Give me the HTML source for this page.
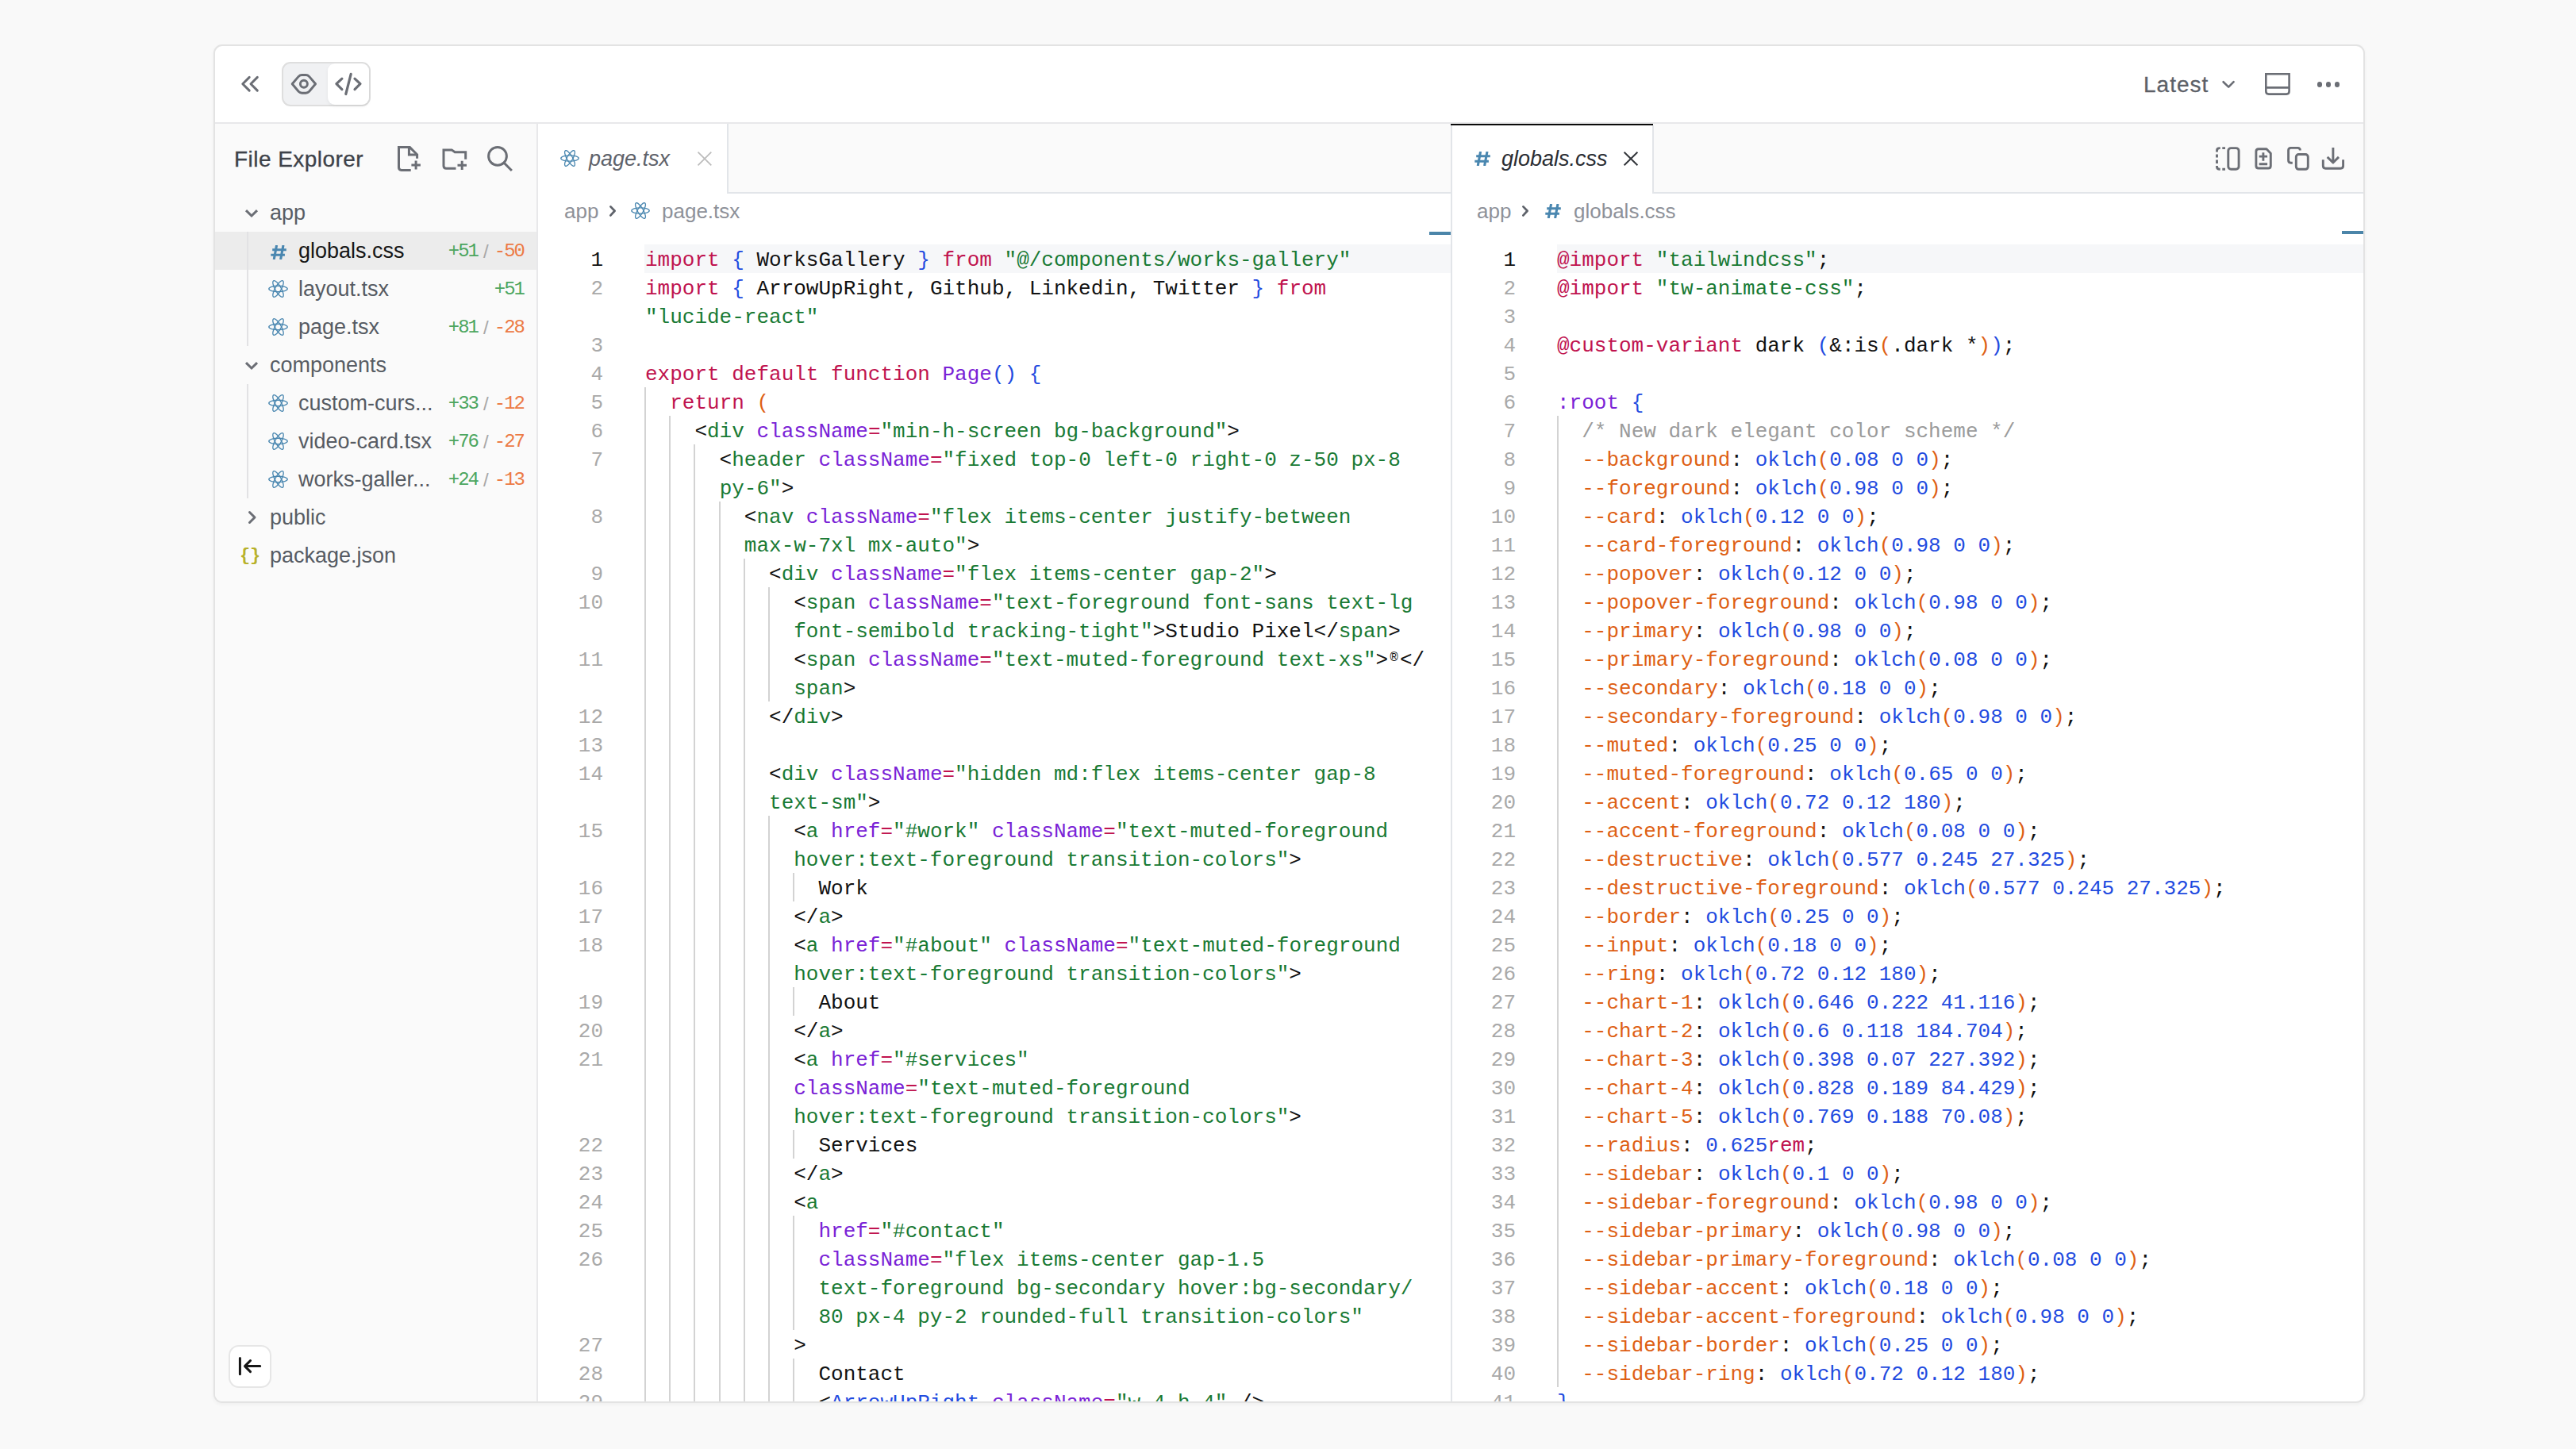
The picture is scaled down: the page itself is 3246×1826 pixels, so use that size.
<!DOCTYPE html>
<html><head><meta charset="utf-8"><title>Editor</title>
<style>
*{margin:0;padding:0;box-sizing:border-box}
html,body{width:3246px;height:1826px;overflow:hidden;background:#f9f9f9;font-family:"Liberation Sans",sans-serif}
.a{position:absolute}
#card{position:absolute;left:269px;top:56px;width:2711px;height:1712px;border:2px solid #e3e3e3;border-radius:11px;background:#fff;overflow:hidden;box-shadow:0 2px 5px rgba(0,0,0,0.045)}
.hl{position:absolute;background:#e4e4e7}
.sans{font-family:"Liberation Sans",sans-serif;white-space:pre;line-height:1}
.mono{font-family:"Liberation Mono",monospace;white-space:pre}
.code{position:absolute;font-family:"Liberation Mono",monospace;font-size:26px;line-height:36px;white-space:pre;color:#111}
.ln{position:absolute;font-family:"Liberation Mono",monospace;font-size:26px;line-height:36px;white-space:pre;color:#a9a9a9;text-align:right;width:80px}
.k{color:#c0134f}.b{color:#1f4be0}.o{color:#de5f14}.t{color:#111}.s{color:#197a34}.p{color:#7a22d6}.c{color:#9b9b9b}
.g{position:absolute;width:2px;background:#d3d3d3}
.row{position:absolute;left:271px;width:405px;height:48px}
.fname{position:absolute;font-size:27px;line-height:1;color:#565b63;white-space:pre}
.diff{position:absolute;font-family:"Liberation Mono",monospace;font-size:24px;line-height:1;white-space:pre;text-align:right;letter-spacing:-2px}
.add{color:#4ca65f}.del{color:#ec7a45}.sl{color:#a8a8a8;font-family:"Liberation Sans",sans-serif}
</style></head>
<body>
<div id="card"><div class="a" style="left:-271px;top:-58px;width:3246px;height:1826px">
<div class="hl" style="left:271px;top:154px;width:2707px;height:2px;background:#e8e8ea"></div>
<svg class="a" style="left:0;top:0" width="3246" height="160" viewBox="0 0 3246 160" fill="none" stroke="#6b6e75" stroke-width="3" stroke-linecap="round" stroke-linejoin="round">
<path d="M314.2 97.4 L305.8 105.7 L314.2 114.1 M324.3 97.4 L316 105.7 L324.3 114.1"/>
</svg>
<div class="a" style="left:355px;top:78px;width:112px;height:56px;border:2px solid #dedede;border-radius:11px;background:#f0f1f3"></div>
<div class="a" style="left:413px;top:80px;width:52px;height:52px;border-radius:9px;background:#fff;box-shadow:0 2px 4px rgba(0,0,0,0.06)"></div>
<svg class="a" style="left:0;top:0" width="3246" height="160" viewBox="0 0 3246 160" fill="none" stroke="#6b6e75" stroke-width="3.2" stroke-linecap="round" stroke-linejoin="round">
<path d="M368.2 105.8 L376.2 96.4 Q378 94.5 380.5 94.5 H385.3 Q387.8 94.5 389.6 96.4 L397.6 105.8 L389.6 115.3 Q387.8 117.2 385.3 117.2 H380.5 Q378 117.2 376.2 115.3 Z" stroke-width="2.9"/>
<circle cx="382.9" cy="105.8" r="4.5" stroke-width="2.9"/>
<path d="M430.9 99.1 L423.9 105.7 L430.9 112.6 M447 99.1 L454 105.7 L447 112.6 M442.2 93.4 L435.8 118.5"/>
</svg>
<div class="a sans" style="left:2701px;top:92.5px;font-size:28px;color:#5c6067;letter-spacing:1px;-webkit-text-stroke:0.3px #5c6067">Latest</div>
<svg class="a" style="left:0;top:0" width="3246" height="160" viewBox="0 0 3246 160" fill="none" stroke="#6b6e75" stroke-width="2.6" stroke-linecap="round" stroke-linejoin="round">
<path d="M2801.6 103.2 L2808.2 109.6 L2814.6 103.2"/>
<path d="M2855.3 93.3 H2884.6 V115 Q2884.6 118.6 2881 118.6 H2858.9 Q2855.3 118.6 2855.3 115 Z M2855.3 110.4 H2884.6" stroke-linecap="butt" stroke-linejoin="miter"/>
</svg>
<div class="a" style="left:2919.5px;top:102.8px;width:6.8px;height:6.8px;border-radius:50%;background:#6b6e75"></div>
<div class="a" style="left:2930.6px;top:102.8px;width:6.8px;height:6.8px;border-radius:50%;background:#6b6e75"></div>
<div class="a" style="left:2941.5px;top:102.8px;width:6.8px;height:6.8px;border-radius:50%;background:#6b6e75"></div>
<div class="a" style="left:271px;top:156px;width:405px;height:1610px;background:#fafafa"></div>
<div class="a" style="left:676px;top:156px;width:2px;height:1610px;background:#e8e8ea"></div>
<div class="a sans" style="left:295px;top:187px;font-size:28px;color:#3e4249;letter-spacing:0.45px;-webkit-text-stroke:0.3px #3e4249">File Explorer</div>
<svg class="a" style="left:490px;top:175px" width="170" height="50" viewBox="0 0 170 50" fill="none" stroke="#6b6e75" stroke-width="3" stroke-linecap="butt" stroke-linejoin="miter">
<path d="M27.7 39.4 H15.8 Q12.5 39.4 12.5 36.1 V10.6 H26.4 L35.6 19.8 V24.8"/>
<path d="M25.4 10.6 V20.1 H35.6"/>
<path d="M28.4 33 H39.9 M34.1 27.4 V38.6"/>
<path d="M84.5 37.3 H72.3 Q69 37.3 69 34 V13.9 H79.2 L83.2 16.8 H96.7 V25.7"/>
<path d="M86.5 33.3 H98 M92.2 27.7 V38.9"/>
<circle cx="137" cy="21.8" r="11.4"/>
<path d="M145.2 30.3 L153.8 38.9" stroke-linecap="square"/>
</svg>
<div class="a" style="left:271px;top:292px;width:405px;height:48px;background:#ececec"></div>
<div class="a" style="left:311px;top:292px;width:2px;height:144px;background:#e2e2e4"></div>
<div class="a" style="left:311px;top:484px;width:2px;height:144px;background:#e2e2e4"></div>
<svg class="a" style="left:305px;top:261.5px" width="24" height="16" viewBox="0 0 24 16" fill="none" stroke="#6b6e75" stroke-width="3" stroke-linecap="butt" stroke-linejoin="miter"><path d="M5 3.2 L12 10 L19 3.2"/></svg>
<div class="fname" style="left:340px;top:255px;color:#585d64">app</div>
<svg class="a" style="left:341px;top:309px" width="20" height="18" viewBox="0 0 20 18" fill="none" stroke="#4a87b0" stroke-width="3.1" stroke-linecap="butt"><path d="M7.6 0 L4.2 18 M16 0 L12.6 18 M2.2 5.8 H19.8 M0.3 12.2 H17.9"/></svg>
<div class="fname" style="left:376px;top:303px;color:#161616">globals.css</div>
<div class="diff add" style="right:2644px;top:305px">+51</div>
<div class="a sans" style="left:609px;top:305px;font-size:24px;color:#a8a8a8">/</div>
<div class="diff del" style="right:2586px;top:305px">-50</div>
<svg class="a" style="left:338px;top:353px" width="25" height="22" viewBox="0 0 25 22" fill="none" stroke="#4a87b0" stroke-width="1.35"><ellipse cx="12.5" cy="11.0" rx="11.7" ry="3.74" transform="rotate(0 12.5 11.0)"/><ellipse cx="12.5" cy="11.0" rx="11.7" ry="3.74" transform="rotate(60 12.5 11.0)"/><ellipse cx="12.5" cy="11.0" rx="11.7" ry="3.74" transform="rotate(120 12.5 11.0)"/></svg>
<div class="fname" style="left:376px;top:351px;color:#565b63">layout.tsx</div>
<div class="diff add" style="right:2586px;top:353px">+51</div>
<svg class="a" style="left:338px;top:401px" width="25" height="22" viewBox="0 0 25 22" fill="none" stroke="#4a87b0" stroke-width="1.35"><ellipse cx="12.5" cy="11.0" rx="11.7" ry="3.74" transform="rotate(0 12.5 11.0)"/><ellipse cx="12.5" cy="11.0" rx="11.7" ry="3.74" transform="rotate(60 12.5 11.0)"/><ellipse cx="12.5" cy="11.0" rx="11.7" ry="3.74" transform="rotate(120 12.5 11.0)"/></svg>
<div class="fname" style="left:376px;top:399px;color:#565b63">page.tsx</div>
<div class="diff add" style="right:2644px;top:401px">+81</div>
<div class="a sans" style="left:609px;top:401px;font-size:24px;color:#a8a8a8">/</div>
<div class="diff del" style="right:2586px;top:401px">-28</div>
<svg class="a" style="left:305px;top:453.5px" width="24" height="16" viewBox="0 0 24 16" fill="none" stroke="#6b6e75" stroke-width="3" stroke-linecap="butt" stroke-linejoin="miter"><path d="M5 3.2 L12 10 L19 3.2"/></svg>
<div class="fname" style="left:340px;top:447px;color:#585d64">components</div>
<svg class="a" style="left:338px;top:497px" width="25" height="22" viewBox="0 0 25 22" fill="none" stroke="#4a87b0" stroke-width="1.35"><ellipse cx="12.5" cy="11.0" rx="11.7" ry="3.74" transform="rotate(0 12.5 11.0)"/><ellipse cx="12.5" cy="11.0" rx="11.7" ry="3.74" transform="rotate(60 12.5 11.0)"/><ellipse cx="12.5" cy="11.0" rx="11.7" ry="3.74" transform="rotate(120 12.5 11.0)"/></svg>
<div class="fname" style="left:376px;top:495px;color:#565b63">custom-curs...</div>
<div class="diff add" style="right:2644px;top:497px">+33</div>
<div class="a sans" style="left:609px;top:497px;font-size:24px;color:#a8a8a8">/</div>
<div class="diff del" style="right:2586px;top:497px">-12</div>
<svg class="a" style="left:338px;top:545px" width="25" height="22" viewBox="0 0 25 22" fill="none" stroke="#4a87b0" stroke-width="1.35"><ellipse cx="12.5" cy="11.0" rx="11.7" ry="3.74" transform="rotate(0 12.5 11.0)"/><ellipse cx="12.5" cy="11.0" rx="11.7" ry="3.74" transform="rotate(60 12.5 11.0)"/><ellipse cx="12.5" cy="11.0" rx="11.7" ry="3.74" transform="rotate(120 12.5 11.0)"/></svg>
<div class="fname" style="left:376px;top:543px;color:#565b63">video-card.tsx</div>
<div class="diff add" style="right:2644px;top:545px">+76</div>
<div class="a sans" style="left:609px;top:545px;font-size:24px;color:#a8a8a8">/</div>
<div class="diff del" style="right:2586px;top:545px">-27</div>
<svg class="a" style="left:338px;top:593px" width="25" height="22" viewBox="0 0 25 22" fill="none" stroke="#4a87b0" stroke-width="1.35"><ellipse cx="12.5" cy="11.0" rx="11.7" ry="3.74" transform="rotate(0 12.5 11.0)"/><ellipse cx="12.5" cy="11.0" rx="11.7" ry="3.74" transform="rotate(60 12.5 11.0)"/><ellipse cx="12.5" cy="11.0" rx="11.7" ry="3.74" transform="rotate(120 12.5 11.0)"/></svg>
<div class="fname" style="left:376px;top:591px;color:#565b63">works-galler...</div>
<div class="diff add" style="right:2644px;top:593px">+24</div>
<div class="a sans" style="left:609px;top:593px;font-size:24px;color:#a8a8a8">/</div>
<div class="diff del" style="right:2586px;top:593px">-13</div>
<svg class="a" style="left:305px;top:640px" width="24" height="24" viewBox="0 0 24 24" fill="none" stroke="#6b6e75" stroke-width="3" stroke-linecap="round" stroke-linejoin="round"><path d="M9.5 5.5 L16 12 L9.5 18.5"/></svg>
<div class="fname" style="left:340px;top:639px;color:#585d64">public</div>
<div class="a mono" style="left:302px;top:690px;font-size:22px;line-height:1;color:#b8b12a;font-weight:bold">{</div>
<div class="a mono" style="left:315px;top:690px;font-size:22px;line-height:1;color:#b8b12a;font-weight:bold">}</div>
<div class="fname" style="left:340px;top:687px;color:#565b63">package.json</div>
<div class="a" style="left:288px;top:1695px;width:54px;height:54px;border:2px solid #e6e6e6;border-radius:13px;background:#fff"></div>
<svg class="a" style="left:288px;top:1695px" width="54" height="54" viewBox="0 0 54 54" fill="none" stroke="#161616" stroke-width="3" stroke-linecap="round" stroke-linejoin="round"><path d="M14.4 16.6 V36.7 M39.7 26.6 H20.5 M27.5 19.6 L20.5 26.6 L27.5 33.6"/></svg>
<div class="a" style="left:678px;top:156px;width:1150px;height:86px;background:#fafafa"></div>
<div class="a" style="left:678px;top:242px;width:1150px;height:2px;background:#e2e5e9"></div>
<div class="a" style="left:678px;top:156px;width:238px;height:88px;background:#fff"></div>
<div class="a" style="left:916px;top:156px;width:2px;height:87px;background:#e2e5e9"></div>
<div class="a" style="left:1828px;top:158px;width:2px;height:1608px;background:#e2e5e9"></div>
<div class="a" style="left:1830px;top:156px;width:1148px;height:86px;background:#fafafa"></div>
<div class="a" style="left:1830px;top:242px;width:1148px;height:2px;background:#e2e5e9"></div>
<div class="a" style="left:1830px;top:156px;width:252px;height:88px;background:#fff"></div>
<div class="a" style="left:1828px;top:156px;width:255px;height:2px;background:#0a0a0a"></div>
<div class="a" style="left:2082px;top:158px;width:2px;height:85px;background:#e2e5e9"></div>
<svg class="a" style="left:706px;top:189px" width="24" height="21" viewBox="0 0 24 21" fill="none" stroke="#4a87b0" stroke-width="1.35"><ellipse cx="12.0" cy="10.5" rx="11.2" ry="3.5700000000000003" transform="rotate(0 12.0 10.5)"/><ellipse cx="12.0" cy="10.5" rx="11.2" ry="3.5700000000000003" transform="rotate(60 12.0 10.5)"/><ellipse cx="12.0" cy="10.5" rx="11.2" ry="3.5700000000000003" transform="rotate(120 12.0 10.5)"/></svg>
<div class="a sans" style="left:742px;top:187px;font-size:27px;color:#5f636b;font-style:italic">page.tsx</div>
<svg class="a" style="left:878px;top:190px" width="20" height="20" viewBox="0 0 20 20" fill="none" stroke="#bdbdbd" stroke-width="1.8"><path d="M1.5 1.6 L18.3 18.4 M18.3 1.6 L1.5 18.4"/></svg>
<div class="a sans" style="left:711px;top:253px;font-size:26px;color:#8e9199">app</div>
<svg class="a" style="left:760px;top:252px" width="24" height="28" viewBox="0 0 24 28" fill="none" stroke="#5f636b" stroke-width="2.8" stroke-linecap="round" stroke-linejoin="round"><path d="M9.4 8.4 L14.6 13.8 L9.4 19.4"/></svg>
<svg class="a" style="left:795px;top:255px" width="24" height="21" viewBox="0 0 24 21" fill="none" stroke="#4a87b0" stroke-width="1.35"><ellipse cx="12.0" cy="10.5" rx="11.2" ry="3.5700000000000003" transform="rotate(0 12.0 10.5)"/><ellipse cx="12.0" cy="10.5" rx="11.2" ry="3.5700000000000003" transform="rotate(60 12.0 10.5)"/><ellipse cx="12.0" cy="10.5" rx="11.2" ry="3.5700000000000003" transform="rotate(120 12.0 10.5)"/></svg>
<div class="a sans" style="left:834px;top:253px;font-size:26px;color:#8e9199">page.tsx</div>
<svg class="a" style="left:1858px;top:191px" width="20" height="18" viewBox="0 0 20 18" fill="none" stroke="#4a87b0" stroke-width="3.1" stroke-linecap="butt"><path d="M7.6 0 L4.2 18 M16 0 L12.6 18 M2.2 5.8 H19.8 M0.3 12.2 H17.9"/></svg>
<div class="a sans" style="left:1892px;top:187px;font-size:27px;color:#2a2d33;font-style:italic">globals.css</div>
<svg class="a" style="left:2045px;top:190px" width="20" height="20" viewBox="0 0 20 20" fill="none" stroke="#33363b" stroke-width="2"><path d="M1.6 1.7 L18.4 18.3 M18.4 1.7 L1.6 18.3"/></svg>
<div class="a sans" style="left:1861px;top:253px;font-size:26px;color:#8e9199">app</div>
<svg class="a" style="left:1910px;top:252px" width="24" height="28" viewBox="0 0 24 28" fill="none" stroke="#5f636b" stroke-width="2.8" stroke-linecap="round" stroke-linejoin="round"><path d="M9.4 8.4 L14.6 13.8 L9.4 19.4"/></svg>
<svg class="a" style="left:1947px;top:257px" width="20" height="18" viewBox="0 0 20 18" fill="none" stroke="#4a87b0" stroke-width="3.1" stroke-linecap="butt"><path d="M7.6 0 L4.2 18 M16 0 L12.6 18 M2.2 5.8 H19.8 M0.3 12.2 H17.9"/></svg>
<div class="a sans" style="left:1983px;top:253px;font-size:26px;color:#8e9199">globals.css</div>
<svg class="a" style="left:2780px;top:175px" width="190" height="50" viewBox="0 0 190 50" fill="none" stroke="#6b6e75" stroke-width="2.9" stroke-linecap="butt" stroke-linejoin="round">
<rect x="27.8" y="11.6" width="13.3" height="26.6" rx="3.5"/>
<path d="M17.7 11.6 H16.8 Q13.5 11.6 13.5 14.9 V16.5 M20.3 11.6 H24 M13.5 19.5 V23.5 M13.5 26.5 V31 M13.5 34 V35 Q13.5 38.2 16.8 38.2 H17.7 M20.3 38.2 H24"/>
<path d="M76 12.7 H66 Q62.9 12.7 62.9 15.8 V33.9 Q62.9 37 66 37 H78.2 Q81.3 37 81.3 33.9 V18.2 Z"/>
<path d="M66.7 22.1 H77.1 M71.9 17.3 V27.7 M66.7 31.7 H77.1"/>
<path d="M108.8 30.2 H106.7 Q103.6 30.2 103.6 27.1 V14.5 Q103.6 11.4 106.7 11.4 H115.3 Q118.4 11.4 118.4 14.5 V14.6"/>
<rect x="113.3" y="19.5" width="15" height="18.8" rx="3.2"/>
<path d="M147.3 26.2 V34.1 Q147.3 37.2 150.4 37.2 H169.5 Q172.6 37.2 172.6 34.1 V26.2"/>
<path d="M159.9 11.1 V30 M152.7 22.9 L159.9 30 L167 22.9"/>
</svg>
<div class="a" style="left:812px;top:308px;width:1016px;height:36px;background:#f6f7f9"></div>
<div class="a" style="left:1962px;top:308px;width:1016px;height:36px;background:#f6f7f9"></div>
<div class="a" style="left:1801px;top:292px;width:27px;height:4px;background:#4b85a9"></div>
<div class="a" style="left:2951px;top:291px;width:27px;height:4px;background:#4b85a9"></div>
<div class="a" style="left:678px;top:244px;width:1150px;height:1522px;overflow:hidden">
<div class="a" style="left:-678px;top:-244px;width:3246px;height:1826px">
<div class="ln" style="left:680px;top:310px;color:#111">1</div>
<div class="code" style="left:813px;top:310px"><span class="k">import</span><span class="t"> </span><span class="b">{</span><span class="t"> WorksGallery </span><span class="b">}</span><span class="t"> </span><span class="k">from</span><span class="t"> </span><span class="s">&quot;@/components/works-gallery&quot;</span></div>
<div class="ln" style="left:680px;top:346px;color:#a9a9a9">2</div>
<div class="code" style="left:813px;top:346px"><span class="k">import</span><span class="t"> </span><span class="b">{</span><span class="t"> ArrowUpRight, Github, Linkedin, Twitter </span><span class="b">}</span><span class="t"> </span><span class="k">from</span></div>
<div class="code" style="left:813px;top:382px"><span class="s">&quot;lucide-react&quot;</span></div>
<div class="ln" style="left:680px;top:418px;color:#a9a9a9">3</div>
<div class="ln" style="left:680px;top:454px;color:#a9a9a9">4</div>
<div class="code" style="left:813px;top:454px"><span class="k">export default function</span><span class="t"> </span><span class="p">Page</span><span class="b">()</span><span class="t"> </span><span class="b">{</span></div>
<div class="ln" style="left:680px;top:490px;color:#a9a9a9">5</div>
<div class="g" style="left:812.0px;top:488px;height:36px"></div>
<div class="code" style="left:813px;top:490px"><span class="t">  </span><span class="k">return</span><span class="t"> </span><span class="o">(</span></div>
<div class="ln" style="left:680px;top:526px;color:#a9a9a9">6</div>
<div class="g" style="left:812.0px;top:524px;height:36px"></div>
<div class="g" style="left:843.2px;top:524px;height:36px"></div>
<div class="code" style="left:813px;top:526px"><span class="t">    &lt;</span><span class="s">div</span><span class="t"> </span><span class="p">className</span><span class="k">=</span><span class="s">&quot;min-h-screen bg-background&quot;</span><span class="t">&gt;</span></div>
<div class="ln" style="left:680px;top:562px;color:#a9a9a9">7</div>
<div class="g" style="left:812.0px;top:560px;height:36px"></div>
<div class="g" style="left:843.2px;top:560px;height:36px"></div>
<div class="g" style="left:874.4px;top:560px;height:36px"></div>
<div class="code" style="left:813px;top:562px"><span class="t">      &lt;</span><span class="s">header</span><span class="t"> </span><span class="p">className</span><span class="k">=</span><span class="s">&quot;fixed top-0 left-0 right-0 z-50 px-8</span></div>
<div class="g" style="left:812.0px;top:596px;height:36px"></div>
<div class="g" style="left:843.2px;top:596px;height:36px"></div>
<div class="g" style="left:874.4px;top:596px;height:36px"></div>
<div class="code" style="left:813px;top:598px"><span class="t">      </span><span class="s">py-6&quot;</span><span class="t">&gt;</span></div>
<div class="ln" style="left:680px;top:634px;color:#a9a9a9">8</div>
<div class="g" style="left:812.0px;top:632px;height:36px"></div>
<div class="g" style="left:843.2px;top:632px;height:36px"></div>
<div class="g" style="left:874.4px;top:632px;height:36px"></div>
<div class="g" style="left:905.6px;top:632px;height:36px"></div>
<div class="code" style="left:813px;top:634px"><span class="t">        &lt;</span><span class="s">nav</span><span class="t"> </span><span class="p">className</span><span class="k">=</span><span class="s">&quot;flex items-center justify-between</span></div>
<div class="g" style="left:812.0px;top:668px;height:36px"></div>
<div class="g" style="left:843.2px;top:668px;height:36px"></div>
<div class="g" style="left:874.4px;top:668px;height:36px"></div>
<div class="g" style="left:905.6px;top:668px;height:36px"></div>
<div class="code" style="left:813px;top:670px"><span class="t">        </span><span class="s">max-w-7xl mx-auto&quot;</span><span class="t">&gt;</span></div>
<div class="ln" style="left:680px;top:706px;color:#a9a9a9">9</div>
<div class="g" style="left:812.0px;top:704px;height:36px"></div>
<div class="g" style="left:843.2px;top:704px;height:36px"></div>
<div class="g" style="left:874.4px;top:704px;height:36px"></div>
<div class="g" style="left:905.6px;top:704px;height:36px"></div>
<div class="g" style="left:936.8px;top:704px;height:36px"></div>
<div class="code" style="left:813px;top:706px"><span class="t">          &lt;</span><span class="s">div</span><span class="t"> </span><span class="p">className</span><span class="k">=</span><span class="s">&quot;flex items-center gap-2&quot;</span><span class="t">&gt;</span></div>
<div class="ln" style="left:680px;top:742px;color:#a9a9a9">10</div>
<div class="g" style="left:812.0px;top:740px;height:36px"></div>
<div class="g" style="left:843.2px;top:740px;height:36px"></div>
<div class="g" style="left:874.4px;top:740px;height:36px"></div>
<div class="g" style="left:905.6px;top:740px;height:36px"></div>
<div class="g" style="left:936.8px;top:740px;height:36px"></div>
<div class="g" style="left:968.0px;top:740px;height:36px"></div>
<div class="code" style="left:813px;top:742px"><span class="t">            &lt;</span><span class="s">span</span><span class="t"> </span><span class="p">className</span><span class="k">=</span><span class="s">&quot;text-foreground font-sans text-lg</span></div>
<div class="g" style="left:812.0px;top:776px;height:36px"></div>
<div class="g" style="left:843.2px;top:776px;height:36px"></div>
<div class="g" style="left:874.4px;top:776px;height:36px"></div>
<div class="g" style="left:905.6px;top:776px;height:36px"></div>
<div class="g" style="left:936.8px;top:776px;height:36px"></div>
<div class="g" style="left:968.0px;top:776px;height:36px"></div>
<div class="code" style="left:813px;top:778px"><span class="t">            </span><span class="s">font-semibold tracking-tight&quot;</span><span class="t">&gt;Studio Pixel&lt;/</span><span class="s">span</span><span class="t">&gt;</span></div>
<div class="ln" style="left:680px;top:814px;color:#a9a9a9">11</div>
<div class="g" style="left:812.0px;top:812px;height:36px"></div>
<div class="g" style="left:843.2px;top:812px;height:36px"></div>
<div class="g" style="left:874.4px;top:812px;height:36px"></div>
<div class="g" style="left:905.6px;top:812px;height:36px"></div>
<div class="g" style="left:936.8px;top:812px;height:36px"></div>
<div class="g" style="left:968.0px;top:812px;height:36px"></div>
<div class="code" style="left:813px;top:814px"><span class="t">            &lt;</span><span class="s">span</span><span class="t"> </span><span class="p">className</span><span class="k">=</span><span class="s">&quot;text-muted-foreground text-xs&quot;</span><span class="t">&gt;<span style="font-size:17px;position:relative;top:-6px;margin:0 2.25px">®</span>&lt;/</span></div>
<div class="g" style="left:812.0px;top:848px;height:36px"></div>
<div class="g" style="left:843.2px;top:848px;height:36px"></div>
<div class="g" style="left:874.4px;top:848px;height:36px"></div>
<div class="g" style="left:905.6px;top:848px;height:36px"></div>
<div class="g" style="left:936.8px;top:848px;height:36px"></div>
<div class="g" style="left:968.0px;top:848px;height:36px"></div>
<div class="code" style="left:813px;top:850px"><span class="t">            </span><span class="s">span</span><span class="t">&gt;</span></div>
<div class="ln" style="left:680px;top:886px;color:#a9a9a9">12</div>
<div class="g" style="left:812.0px;top:884px;height:36px"></div>
<div class="g" style="left:843.2px;top:884px;height:36px"></div>
<div class="g" style="left:874.4px;top:884px;height:36px"></div>
<div class="g" style="left:905.6px;top:884px;height:36px"></div>
<div class="g" style="left:936.8px;top:884px;height:36px"></div>
<div class="code" style="left:813px;top:886px"><span class="t">          &lt;/</span><span class="s">div</span><span class="t">&gt;</span></div>
<div class="ln" style="left:680px;top:922px;color:#a9a9a9">13</div>
<div class="g" style="left:812.0px;top:920px;height:36px"></div>
<div class="g" style="left:843.2px;top:920px;height:36px"></div>
<div class="g" style="left:874.4px;top:920px;height:36px"></div>
<div class="g" style="left:905.6px;top:920px;height:36px"></div>
<div class="g" style="left:936.8px;top:920px;height:36px"></div>
<div class="ln" style="left:680px;top:958px;color:#a9a9a9">14</div>
<div class="g" style="left:812.0px;top:956px;height:36px"></div>
<div class="g" style="left:843.2px;top:956px;height:36px"></div>
<div class="g" style="left:874.4px;top:956px;height:36px"></div>
<div class="g" style="left:905.6px;top:956px;height:36px"></div>
<div class="g" style="left:936.8px;top:956px;height:36px"></div>
<div class="code" style="left:813px;top:958px"><span class="t">          &lt;</span><span class="s">div</span><span class="t"> </span><span class="p">className</span><span class="k">=</span><span class="s">&quot;hidden md:flex items-center gap-8</span></div>
<div class="g" style="left:812.0px;top:992px;height:36px"></div>
<div class="g" style="left:843.2px;top:992px;height:36px"></div>
<div class="g" style="left:874.4px;top:992px;height:36px"></div>
<div class="g" style="left:905.6px;top:992px;height:36px"></div>
<div class="g" style="left:936.8px;top:992px;height:36px"></div>
<div class="code" style="left:813px;top:994px"><span class="t">          </span><span class="s">text-sm&quot;</span><span class="t">&gt;</span></div>
<div class="ln" style="left:680px;top:1030px;color:#a9a9a9">15</div>
<div class="g" style="left:812.0px;top:1028px;height:36px"></div>
<div class="g" style="left:843.2px;top:1028px;height:36px"></div>
<div class="g" style="left:874.4px;top:1028px;height:36px"></div>
<div class="g" style="left:905.6px;top:1028px;height:36px"></div>
<div class="g" style="left:936.8px;top:1028px;height:36px"></div>
<div class="g" style="left:968.0px;top:1028px;height:36px"></div>
<div class="code" style="left:813px;top:1030px"><span class="t">            &lt;</span><span class="s">a</span><span class="t"> </span><span class="p">href</span><span class="k">=</span><span class="s">&quot;#work&quot;</span><span class="t"> </span><span class="p">className</span><span class="k">=</span><span class="s">&quot;text-muted-foreground</span></div>
<div class="g" style="left:812.0px;top:1064px;height:36px"></div>
<div class="g" style="left:843.2px;top:1064px;height:36px"></div>
<div class="g" style="left:874.4px;top:1064px;height:36px"></div>
<div class="g" style="left:905.6px;top:1064px;height:36px"></div>
<div class="g" style="left:936.8px;top:1064px;height:36px"></div>
<div class="g" style="left:968.0px;top:1064px;height:36px"></div>
<div class="code" style="left:813px;top:1066px"><span class="t">            </span><span class="s">hover:text-foreground transition-colors&quot;</span><span class="t">&gt;</span></div>
<div class="ln" style="left:680px;top:1102px;color:#a9a9a9">16</div>
<div class="g" style="left:812.0px;top:1100px;height:36px"></div>
<div class="g" style="left:843.2px;top:1100px;height:36px"></div>
<div class="g" style="left:874.4px;top:1100px;height:36px"></div>
<div class="g" style="left:905.6px;top:1100px;height:36px"></div>
<div class="g" style="left:936.8px;top:1100px;height:36px"></div>
<div class="g" style="left:968.0px;top:1100px;height:36px"></div>
<div class="g" style="left:999.2px;top:1100px;height:36px"></div>
<div class="code" style="left:813px;top:1102px"><span class="t">              Work</span></div>
<div class="ln" style="left:680px;top:1138px;color:#a9a9a9">17</div>
<div class="g" style="left:812.0px;top:1136px;height:36px"></div>
<div class="g" style="left:843.2px;top:1136px;height:36px"></div>
<div class="g" style="left:874.4px;top:1136px;height:36px"></div>
<div class="g" style="left:905.6px;top:1136px;height:36px"></div>
<div class="g" style="left:936.8px;top:1136px;height:36px"></div>
<div class="g" style="left:968.0px;top:1136px;height:36px"></div>
<div class="code" style="left:813px;top:1138px"><span class="t">            &lt;/</span><span class="s">a</span><span class="t">&gt;</span></div>
<div class="ln" style="left:680px;top:1174px;color:#a9a9a9">18</div>
<div class="g" style="left:812.0px;top:1172px;height:36px"></div>
<div class="g" style="left:843.2px;top:1172px;height:36px"></div>
<div class="g" style="left:874.4px;top:1172px;height:36px"></div>
<div class="g" style="left:905.6px;top:1172px;height:36px"></div>
<div class="g" style="left:936.8px;top:1172px;height:36px"></div>
<div class="g" style="left:968.0px;top:1172px;height:36px"></div>
<div class="code" style="left:813px;top:1174px"><span class="t">            &lt;</span><span class="s">a</span><span class="t"> </span><span class="p">href</span><span class="k">=</span><span class="s">&quot;#about&quot;</span><span class="t"> </span><span class="p">className</span><span class="k">=</span><span class="s">&quot;text-muted-foreground</span></div>
<div class="g" style="left:812.0px;top:1208px;height:36px"></div>
<div class="g" style="left:843.2px;top:1208px;height:36px"></div>
<div class="g" style="left:874.4px;top:1208px;height:36px"></div>
<div class="g" style="left:905.6px;top:1208px;height:36px"></div>
<div class="g" style="left:936.8px;top:1208px;height:36px"></div>
<div class="g" style="left:968.0px;top:1208px;height:36px"></div>
<div class="code" style="left:813px;top:1210px"><span class="t">            </span><span class="s">hover:text-foreground transition-colors&quot;</span><span class="t">&gt;</span></div>
<div class="ln" style="left:680px;top:1246px;color:#a9a9a9">19</div>
<div class="g" style="left:812.0px;top:1244px;height:36px"></div>
<div class="g" style="left:843.2px;top:1244px;height:36px"></div>
<div class="g" style="left:874.4px;top:1244px;height:36px"></div>
<div class="g" style="left:905.6px;top:1244px;height:36px"></div>
<div class="g" style="left:936.8px;top:1244px;height:36px"></div>
<div class="g" style="left:968.0px;top:1244px;height:36px"></div>
<div class="g" style="left:999.2px;top:1244px;height:36px"></div>
<div class="code" style="left:813px;top:1246px"><span class="t">              About</span></div>
<div class="ln" style="left:680px;top:1282px;color:#a9a9a9">20</div>
<div class="g" style="left:812.0px;top:1280px;height:36px"></div>
<div class="g" style="left:843.2px;top:1280px;height:36px"></div>
<div class="g" style="left:874.4px;top:1280px;height:36px"></div>
<div class="g" style="left:905.6px;top:1280px;height:36px"></div>
<div class="g" style="left:936.8px;top:1280px;height:36px"></div>
<div class="g" style="left:968.0px;top:1280px;height:36px"></div>
<div class="code" style="left:813px;top:1282px"><span class="t">            &lt;/</span><span class="s">a</span><span class="t">&gt;</span></div>
<div class="ln" style="left:680px;top:1318px;color:#a9a9a9">21</div>
<div class="g" style="left:812.0px;top:1316px;height:36px"></div>
<div class="g" style="left:843.2px;top:1316px;height:36px"></div>
<div class="g" style="left:874.4px;top:1316px;height:36px"></div>
<div class="g" style="left:905.6px;top:1316px;height:36px"></div>
<div class="g" style="left:936.8px;top:1316px;height:36px"></div>
<div class="g" style="left:968.0px;top:1316px;height:36px"></div>
<div class="code" style="left:813px;top:1318px"><span class="t">            &lt;</span><span class="s">a</span><span class="t"> </span><span class="p">href</span><span class="k">=</span><span class="s">&quot;#services&quot;</span></div>
<div class="g" style="left:812.0px;top:1352px;height:36px"></div>
<div class="g" style="left:843.2px;top:1352px;height:36px"></div>
<div class="g" style="left:874.4px;top:1352px;height:36px"></div>
<div class="g" style="left:905.6px;top:1352px;height:36px"></div>
<div class="g" style="left:936.8px;top:1352px;height:36px"></div>
<div class="g" style="left:968.0px;top:1352px;height:36px"></div>
<div class="code" style="left:813px;top:1354px"><span class="t">            </span><span class="p">className</span><span class="k">=</span><span class="s">&quot;text-muted-foreground</span></div>
<div class="g" style="left:812.0px;top:1388px;height:36px"></div>
<div class="g" style="left:843.2px;top:1388px;height:36px"></div>
<div class="g" style="left:874.4px;top:1388px;height:36px"></div>
<div class="g" style="left:905.6px;top:1388px;height:36px"></div>
<div class="g" style="left:936.8px;top:1388px;height:36px"></div>
<div class="g" style="left:968.0px;top:1388px;height:36px"></div>
<div class="code" style="left:813px;top:1390px"><span class="t">            </span><span class="s">hover:text-foreground transition-colors&quot;</span><span class="t">&gt;</span></div>
<div class="ln" style="left:680px;top:1426px;color:#a9a9a9">22</div>
<div class="g" style="left:812.0px;top:1424px;height:36px"></div>
<div class="g" style="left:843.2px;top:1424px;height:36px"></div>
<div class="g" style="left:874.4px;top:1424px;height:36px"></div>
<div class="g" style="left:905.6px;top:1424px;height:36px"></div>
<div class="g" style="left:936.8px;top:1424px;height:36px"></div>
<div class="g" style="left:968.0px;top:1424px;height:36px"></div>
<div class="g" style="left:999.2px;top:1424px;height:36px"></div>
<div class="code" style="left:813px;top:1426px"><span class="t">              Services</span></div>
<div class="ln" style="left:680px;top:1462px;color:#a9a9a9">23</div>
<div class="g" style="left:812.0px;top:1460px;height:36px"></div>
<div class="g" style="left:843.2px;top:1460px;height:36px"></div>
<div class="g" style="left:874.4px;top:1460px;height:36px"></div>
<div class="g" style="left:905.6px;top:1460px;height:36px"></div>
<div class="g" style="left:936.8px;top:1460px;height:36px"></div>
<div class="g" style="left:968.0px;top:1460px;height:36px"></div>
<div class="code" style="left:813px;top:1462px"><span class="t">            &lt;/</span><span class="s">a</span><span class="t">&gt;</span></div>
<div class="ln" style="left:680px;top:1498px;color:#a9a9a9">24</div>
<div class="g" style="left:812.0px;top:1496px;height:36px"></div>
<div class="g" style="left:843.2px;top:1496px;height:36px"></div>
<div class="g" style="left:874.4px;top:1496px;height:36px"></div>
<div class="g" style="left:905.6px;top:1496px;height:36px"></div>
<div class="g" style="left:936.8px;top:1496px;height:36px"></div>
<div class="g" style="left:968.0px;top:1496px;height:36px"></div>
<div class="code" style="left:813px;top:1498px"><span class="t">            &lt;</span><span class="s">a</span></div>
<div class="ln" style="left:680px;top:1534px;color:#a9a9a9">25</div>
<div class="g" style="left:812.0px;top:1532px;height:36px"></div>
<div class="g" style="left:843.2px;top:1532px;height:36px"></div>
<div class="g" style="left:874.4px;top:1532px;height:36px"></div>
<div class="g" style="left:905.6px;top:1532px;height:36px"></div>
<div class="g" style="left:936.8px;top:1532px;height:36px"></div>
<div class="g" style="left:968.0px;top:1532px;height:36px"></div>
<div class="g" style="left:999.2px;top:1532px;height:36px"></div>
<div class="code" style="left:813px;top:1534px"><span class="t">              </span><span class="p">href</span><span class="k">=</span><span class="s">&quot;#contact&quot;</span></div>
<div class="ln" style="left:680px;top:1570px;color:#a9a9a9">26</div>
<div class="g" style="left:812.0px;top:1568px;height:36px"></div>
<div class="g" style="left:843.2px;top:1568px;height:36px"></div>
<div class="g" style="left:874.4px;top:1568px;height:36px"></div>
<div class="g" style="left:905.6px;top:1568px;height:36px"></div>
<div class="g" style="left:936.8px;top:1568px;height:36px"></div>
<div class="g" style="left:968.0px;top:1568px;height:36px"></div>
<div class="g" style="left:999.2px;top:1568px;height:36px"></div>
<div class="code" style="left:813px;top:1570px"><span class="t">              </span><span class="p">className</span><span class="k">=</span><span class="s">&quot;flex items-center gap-1.5</span></div>
<div class="g" style="left:812.0px;top:1604px;height:36px"></div>
<div class="g" style="left:843.2px;top:1604px;height:36px"></div>
<div class="g" style="left:874.4px;top:1604px;height:36px"></div>
<div class="g" style="left:905.6px;top:1604px;height:36px"></div>
<div class="g" style="left:936.8px;top:1604px;height:36px"></div>
<div class="g" style="left:968.0px;top:1604px;height:36px"></div>
<div class="g" style="left:999.2px;top:1604px;height:36px"></div>
<div class="code" style="left:813px;top:1606px"><span class="t">              </span><span class="s">text-foreground bg-secondary hover:bg-secondary/</span></div>
<div class="g" style="left:812.0px;top:1640px;height:36px"></div>
<div class="g" style="left:843.2px;top:1640px;height:36px"></div>
<div class="g" style="left:874.4px;top:1640px;height:36px"></div>
<div class="g" style="left:905.6px;top:1640px;height:36px"></div>
<div class="g" style="left:936.8px;top:1640px;height:36px"></div>
<div class="g" style="left:968.0px;top:1640px;height:36px"></div>
<div class="g" style="left:999.2px;top:1640px;height:36px"></div>
<div class="code" style="left:813px;top:1642px"><span class="t">              </span><span class="s">80 px-4 py-2 rounded-full transition-colors&quot;</span></div>
<div class="ln" style="left:680px;top:1678px;color:#a9a9a9">27</div>
<div class="g" style="left:812.0px;top:1676px;height:36px"></div>
<div class="g" style="left:843.2px;top:1676px;height:36px"></div>
<div class="g" style="left:874.4px;top:1676px;height:36px"></div>
<div class="g" style="left:905.6px;top:1676px;height:36px"></div>
<div class="g" style="left:936.8px;top:1676px;height:36px"></div>
<div class="g" style="left:968.0px;top:1676px;height:36px"></div>
<div class="code" style="left:813px;top:1678px"><span class="t">            &gt;</span></div>
<div class="ln" style="left:680px;top:1714px;color:#a9a9a9">28</div>
<div class="g" style="left:812.0px;top:1712px;height:36px"></div>
<div class="g" style="left:843.2px;top:1712px;height:36px"></div>
<div class="g" style="left:874.4px;top:1712px;height:36px"></div>
<div class="g" style="left:905.6px;top:1712px;height:36px"></div>
<div class="g" style="left:936.8px;top:1712px;height:36px"></div>
<div class="g" style="left:968.0px;top:1712px;height:36px"></div>
<div class="g" style="left:999.2px;top:1712px;height:36px"></div>
<div class="code" style="left:813px;top:1714px"><span class="t">              Contact</span></div>
<div class="ln" style="left:680px;top:1750px;color:#a9a9a9">29</div>
<div class="g" style="left:812.0px;top:1748px;height:36px"></div>
<div class="g" style="left:843.2px;top:1748px;height:36px"></div>
<div class="g" style="left:874.4px;top:1748px;height:36px"></div>
<div class="g" style="left:905.6px;top:1748px;height:36px"></div>
<div class="g" style="left:936.8px;top:1748px;height:36px"></div>
<div class="g" style="left:968.0px;top:1748px;height:36px"></div>
<div class="g" style="left:999.2px;top:1748px;height:36px"></div>
<div class="code" style="left:813px;top:1750px"><span class="t">              &lt;</span><span class="b">ArrowUpRight</span><span class="t"> </span><span class="p">className</span><span class="k">=</span><span class="s">&quot;w-4 h-4&quot;</span><span class="t"> /&gt;</span></div>
</div></div>
<div class="a" style="left:1830px;top:244px;width:1148px;height:1522px;overflow:hidden">
<div class="a" style="left:-1830px;top:-244px;width:3246px;height:1826px">
<div class="ln" style="left:1830px;top:310px;color:#111">1</div>
<div class="code" style="left:1962px;top:310px"><span class="k">@import</span><span class="t"> </span><span class="s">&quot;tailwindcss&quot;</span><span class="t">;</span></div>
<div class="ln" style="left:1830px;top:346px;color:#a9a9a9">2</div>
<div class="code" style="left:1962px;top:346px"><span class="k">@import</span><span class="t"> </span><span class="s">&quot;tw-animate-css&quot;</span><span class="t">;</span></div>
<div class="ln" style="left:1830px;top:382px;color:#a9a9a9">3</div>
<div class="ln" style="left:1830px;top:418px;color:#a9a9a9">4</div>
<div class="code" style="left:1962px;top:418px"><span class="k">@custom-variant</span><span class="t"> dark </span><span class="b">(</span><span class="t">&amp;:is</span><span class="o">(</span><span class="t">.dark *</span><span class="o">)</span><span class="b">)</span><span class="t">;</span></div>
<div class="ln" style="left:1830px;top:454px;color:#a9a9a9">5</div>
<div class="ln" style="left:1830px;top:490px;color:#a9a9a9">6</div>
<div class="code" style="left:1962px;top:490px"><span class="p">:root</span><span class="t"> </span><span class="b">{</span></div>
<div class="ln" style="left:1830px;top:526px;color:#a9a9a9">7</div>
<div class="g" style="left:1962.0px;top:524px;height:36px"></div>
<div class="code" style="left:1962px;top:526px"><span class="t">  </span><span class="c">/* New dark elegant color scheme */</span></div>
<div class="ln" style="left:1830px;top:562px;color:#a9a9a9">8</div>
<div class="g" style="left:1962.0px;top:560px;height:36px"></div>
<div class="code" style="left:1962px;top:562px"><span class="t">  </span><span class="o">--background</span><span class="t">: </span><span class="b">oklch</span><span class="o">(</span><span class="b">0.08 0 0</span><span class="o">)</span><span class="t">;</span></div>
<div class="ln" style="left:1830px;top:598px;color:#a9a9a9">9</div>
<div class="g" style="left:1962.0px;top:596px;height:36px"></div>
<div class="code" style="left:1962px;top:598px"><span class="t">  </span><span class="o">--foreground</span><span class="t">: </span><span class="b">oklch</span><span class="o">(</span><span class="b">0.98 0 0</span><span class="o">)</span><span class="t">;</span></div>
<div class="ln" style="left:1830px;top:634px;color:#a9a9a9">10</div>
<div class="g" style="left:1962.0px;top:632px;height:36px"></div>
<div class="code" style="left:1962px;top:634px"><span class="t">  </span><span class="o">--card</span><span class="t">: </span><span class="b">oklch</span><span class="o">(</span><span class="b">0.12 0 0</span><span class="o">)</span><span class="t">;</span></div>
<div class="ln" style="left:1830px;top:670px;color:#a9a9a9">11</div>
<div class="g" style="left:1962.0px;top:668px;height:36px"></div>
<div class="code" style="left:1962px;top:670px"><span class="t">  </span><span class="o">--card-foreground</span><span class="t">: </span><span class="b">oklch</span><span class="o">(</span><span class="b">0.98 0 0</span><span class="o">)</span><span class="t">;</span></div>
<div class="ln" style="left:1830px;top:706px;color:#a9a9a9">12</div>
<div class="g" style="left:1962.0px;top:704px;height:36px"></div>
<div class="code" style="left:1962px;top:706px"><span class="t">  </span><span class="o">--popover</span><span class="t">: </span><span class="b">oklch</span><span class="o">(</span><span class="b">0.12 0 0</span><span class="o">)</span><span class="t">;</span></div>
<div class="ln" style="left:1830px;top:742px;color:#a9a9a9">13</div>
<div class="g" style="left:1962.0px;top:740px;height:36px"></div>
<div class="code" style="left:1962px;top:742px"><span class="t">  </span><span class="o">--popover-foreground</span><span class="t">: </span><span class="b">oklch</span><span class="o">(</span><span class="b">0.98 0 0</span><span class="o">)</span><span class="t">;</span></div>
<div class="ln" style="left:1830px;top:778px;color:#a9a9a9">14</div>
<div class="g" style="left:1962.0px;top:776px;height:36px"></div>
<div class="code" style="left:1962px;top:778px"><span class="t">  </span><span class="o">--primary</span><span class="t">: </span><span class="b">oklch</span><span class="o">(</span><span class="b">0.98 0 0</span><span class="o">)</span><span class="t">;</span></div>
<div class="ln" style="left:1830px;top:814px;color:#a9a9a9">15</div>
<div class="g" style="left:1962.0px;top:812px;height:36px"></div>
<div class="code" style="left:1962px;top:814px"><span class="t">  </span><span class="o">--primary-foreground</span><span class="t">: </span><span class="b">oklch</span><span class="o">(</span><span class="b">0.08 0 0</span><span class="o">)</span><span class="t">;</span></div>
<div class="ln" style="left:1830px;top:850px;color:#a9a9a9">16</div>
<div class="g" style="left:1962.0px;top:848px;height:36px"></div>
<div class="code" style="left:1962px;top:850px"><span class="t">  </span><span class="o">--secondary</span><span class="t">: </span><span class="b">oklch</span><span class="o">(</span><span class="b">0.18 0 0</span><span class="o">)</span><span class="t">;</span></div>
<div class="ln" style="left:1830px;top:886px;color:#a9a9a9">17</div>
<div class="g" style="left:1962.0px;top:884px;height:36px"></div>
<div class="code" style="left:1962px;top:886px"><span class="t">  </span><span class="o">--secondary-foreground</span><span class="t">: </span><span class="b">oklch</span><span class="o">(</span><span class="b">0.98 0 0</span><span class="o">)</span><span class="t">;</span></div>
<div class="ln" style="left:1830px;top:922px;color:#a9a9a9">18</div>
<div class="g" style="left:1962.0px;top:920px;height:36px"></div>
<div class="code" style="left:1962px;top:922px"><span class="t">  </span><span class="o">--muted</span><span class="t">: </span><span class="b">oklch</span><span class="o">(</span><span class="b">0.25 0 0</span><span class="o">)</span><span class="t">;</span></div>
<div class="ln" style="left:1830px;top:958px;color:#a9a9a9">19</div>
<div class="g" style="left:1962.0px;top:956px;height:36px"></div>
<div class="code" style="left:1962px;top:958px"><span class="t">  </span><span class="o">--muted-foreground</span><span class="t">: </span><span class="b">oklch</span><span class="o">(</span><span class="b">0.65 0 0</span><span class="o">)</span><span class="t">;</span></div>
<div class="ln" style="left:1830px;top:994px;color:#a9a9a9">20</div>
<div class="g" style="left:1962.0px;top:992px;height:36px"></div>
<div class="code" style="left:1962px;top:994px"><span class="t">  </span><span class="o">--accent</span><span class="t">: </span><span class="b">oklch</span><span class="o">(</span><span class="b">0.72 0.12 180</span><span class="o">)</span><span class="t">;</span></div>
<div class="ln" style="left:1830px;top:1030px;color:#a9a9a9">21</div>
<div class="g" style="left:1962.0px;top:1028px;height:36px"></div>
<div class="code" style="left:1962px;top:1030px"><span class="t">  </span><span class="o">--accent-foreground</span><span class="t">: </span><span class="b">oklch</span><span class="o">(</span><span class="b">0.08 0 0</span><span class="o">)</span><span class="t">;</span></div>
<div class="ln" style="left:1830px;top:1066px;color:#a9a9a9">22</div>
<div class="g" style="left:1962.0px;top:1064px;height:36px"></div>
<div class="code" style="left:1962px;top:1066px"><span class="t">  </span><span class="o">--destructive</span><span class="t">: </span><span class="b">oklch</span><span class="o">(</span><span class="b">0.577 0.245 27.325</span><span class="o">)</span><span class="t">;</span></div>
<div class="ln" style="left:1830px;top:1102px;color:#a9a9a9">23</div>
<div class="g" style="left:1962.0px;top:1100px;height:36px"></div>
<div class="code" style="left:1962px;top:1102px"><span class="t">  </span><span class="o">--destructive-foreground</span><span class="t">: </span><span class="b">oklch</span><span class="o">(</span><span class="b">0.577 0.245 27.325</span><span class="o">)</span><span class="t">;</span></div>
<div class="ln" style="left:1830px;top:1138px;color:#a9a9a9">24</div>
<div class="g" style="left:1962.0px;top:1136px;height:36px"></div>
<div class="code" style="left:1962px;top:1138px"><span class="t">  </span><span class="o">--border</span><span class="t">: </span><span class="b">oklch</span><span class="o">(</span><span class="b">0.25 0 0</span><span class="o">)</span><span class="t">;</span></div>
<div class="ln" style="left:1830px;top:1174px;color:#a9a9a9">25</div>
<div class="g" style="left:1962.0px;top:1172px;height:36px"></div>
<div class="code" style="left:1962px;top:1174px"><span class="t">  </span><span class="o">--input</span><span class="t">: </span><span class="b">oklch</span><span class="o">(</span><span class="b">0.18 0 0</span><span class="o">)</span><span class="t">;</span></div>
<div class="ln" style="left:1830px;top:1210px;color:#a9a9a9">26</div>
<div class="g" style="left:1962.0px;top:1208px;height:36px"></div>
<div class="code" style="left:1962px;top:1210px"><span class="t">  </span><span class="o">--ring</span><span class="t">: </span><span class="b">oklch</span><span class="o">(</span><span class="b">0.72 0.12 180</span><span class="o">)</span><span class="t">;</span></div>
<div class="ln" style="left:1830px;top:1246px;color:#a9a9a9">27</div>
<div class="g" style="left:1962.0px;top:1244px;height:36px"></div>
<div class="code" style="left:1962px;top:1246px"><span class="t">  </span><span class="o">--chart-1</span><span class="t">: </span><span class="b">oklch</span><span class="o">(</span><span class="b">0.646 0.222 41.116</span><span class="o">)</span><span class="t">;</span></div>
<div class="ln" style="left:1830px;top:1282px;color:#a9a9a9">28</div>
<div class="g" style="left:1962.0px;top:1280px;height:36px"></div>
<div class="code" style="left:1962px;top:1282px"><span class="t">  </span><span class="o">--chart-2</span><span class="t">: </span><span class="b">oklch</span><span class="o">(</span><span class="b">0.6 0.118 184.704</span><span class="o">)</span><span class="t">;</span></div>
<div class="ln" style="left:1830px;top:1318px;color:#a9a9a9">29</div>
<div class="g" style="left:1962.0px;top:1316px;height:36px"></div>
<div class="code" style="left:1962px;top:1318px"><span class="t">  </span><span class="o">--chart-3</span><span class="t">: </span><span class="b">oklch</span><span class="o">(</span><span class="b">0.398 0.07 227.392</span><span class="o">)</span><span class="t">;</span></div>
<div class="ln" style="left:1830px;top:1354px;color:#a9a9a9">30</div>
<div class="g" style="left:1962.0px;top:1352px;height:36px"></div>
<div class="code" style="left:1962px;top:1354px"><span class="t">  </span><span class="o">--chart-4</span><span class="t">: </span><span class="b">oklch</span><span class="o">(</span><span class="b">0.828 0.189 84.429</span><span class="o">)</span><span class="t">;</span></div>
<div class="ln" style="left:1830px;top:1390px;color:#a9a9a9">31</div>
<div class="g" style="left:1962.0px;top:1388px;height:36px"></div>
<div class="code" style="left:1962px;top:1390px"><span class="t">  </span><span class="o">--chart-5</span><span class="t">: </span><span class="b">oklch</span><span class="o">(</span><span class="b">0.769 0.188 70.08</span><span class="o">)</span><span class="t">;</span></div>
<div class="ln" style="left:1830px;top:1426px;color:#a9a9a9">32</div>
<div class="g" style="left:1962.0px;top:1424px;height:36px"></div>
<div class="code" style="left:1962px;top:1426px"><span class="t">  </span><span class="o">--radius</span><span class="t">: </span><span class="b">0.625</span><span class="k">rem</span><span class="t">;</span></div>
<div class="ln" style="left:1830px;top:1462px;color:#a9a9a9">33</div>
<div class="g" style="left:1962.0px;top:1460px;height:36px"></div>
<div class="code" style="left:1962px;top:1462px"><span class="t">  </span><span class="o">--sidebar</span><span class="t">: </span><span class="b">oklch</span><span class="o">(</span><span class="b">0.1 0 0</span><span class="o">)</span><span class="t">;</span></div>
<div class="ln" style="left:1830px;top:1498px;color:#a9a9a9">34</div>
<div class="g" style="left:1962.0px;top:1496px;height:36px"></div>
<div class="code" style="left:1962px;top:1498px"><span class="t">  </span><span class="o">--sidebar-foreground</span><span class="t">: </span><span class="b">oklch</span><span class="o">(</span><span class="b">0.98 0 0</span><span class="o">)</span><span class="t">;</span></div>
<div class="ln" style="left:1830px;top:1534px;color:#a9a9a9">35</div>
<div class="g" style="left:1962.0px;top:1532px;height:36px"></div>
<div class="code" style="left:1962px;top:1534px"><span class="t">  </span><span class="o">--sidebar-primary</span><span class="t">: </span><span class="b">oklch</span><span class="o">(</span><span class="b">0.98 0 0</span><span class="o">)</span><span class="t">;</span></div>
<div class="ln" style="left:1830px;top:1570px;color:#a9a9a9">36</div>
<div class="g" style="left:1962.0px;top:1568px;height:36px"></div>
<div class="code" style="left:1962px;top:1570px"><span class="t">  </span><span class="o">--sidebar-primary-foreground</span><span class="t">: </span><span class="b">oklch</span><span class="o">(</span><span class="b">0.08 0 0</span><span class="o">)</span><span class="t">;</span></div>
<div class="ln" style="left:1830px;top:1606px;color:#a9a9a9">37</div>
<div class="g" style="left:1962.0px;top:1604px;height:36px"></div>
<div class="code" style="left:1962px;top:1606px"><span class="t">  </span><span class="o">--sidebar-accent</span><span class="t">: </span><span class="b">oklch</span><span class="o">(</span><span class="b">0.18 0 0</span><span class="o">)</span><span class="t">;</span></div>
<div class="ln" style="left:1830px;top:1642px;color:#a9a9a9">38</div>
<div class="g" style="left:1962.0px;top:1640px;height:36px"></div>
<div class="code" style="left:1962px;top:1642px"><span class="t">  </span><span class="o">--sidebar-accent-foreground</span><span class="t">: </span><span class="b">oklch</span><span class="o">(</span><span class="b">0.98 0 0</span><span class="o">)</span><span class="t">;</span></div>
<div class="ln" style="left:1830px;top:1678px;color:#a9a9a9">39</div>
<div class="g" style="left:1962.0px;top:1676px;height:36px"></div>
<div class="code" style="left:1962px;top:1678px"><span class="t">  </span><span class="o">--sidebar-border</span><span class="t">: </span><span class="b">oklch</span><span class="o">(</span><span class="b">0.25 0 0</span><span class="o">)</span><span class="t">;</span></div>
<div class="ln" style="left:1830px;top:1714px;color:#a9a9a9">40</div>
<div class="g" style="left:1962.0px;top:1712px;height:36px"></div>
<div class="code" style="left:1962px;top:1714px"><span class="t">  </span><span class="o">--sidebar-ring</span><span class="t">: </span><span class="b">oklch</span><span class="o">(</span><span class="b">0.72 0.12 180</span><span class="o">)</span><span class="t">;</span></div>
<div class="ln" style="left:1830px;top:1750px;color:#a9a9a9">41</div>
<div class="code" style="left:1962px;top:1750px"><span class="b">}</span></div>
</div></div>
</div></div>
</body></html>
